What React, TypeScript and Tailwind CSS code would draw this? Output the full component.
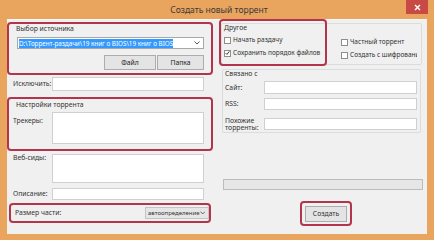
import React from 'react';

const font = { fontFamily: '"Noto Sans", "Open Sans", sans-serif' };

function Check({ checked, label }: { checked?: boolean; label: string }) {
  return (
    <div className="flex items-center h-[10px] gap-[2px] whitespace-nowrap text-[6.5px]">
      <span className="w-[7px] h-[7px] bg-white border border-[#8e8e8e] flex items-center justify-center shrink-0">
        {checked && (
          <svg width="6" height="6" viewBox="0 0 6 6">
            <path d="M0.8 3.2 L2.3 4.7 L5.2 1" stroke="#222" strokeWidth="1.1" fill="none" />
          </svg>
        )}
      </span>
      <span>{label}</span>
    </div>
  );
}

function Btn({ children, w }: { children: React.ReactNode; w: string }) {
  return (
    <div className={`${w} h-[15px] flex items-center justify-center bg-[#e4e4e4] border border-[#adadad] text-[#222]`}>
      {children}
    </div>
  );
}

export default function App() {
  return (
    <div className="w-[434px] h-[240px] bg-[#e9a45e] flex flex-col overflow-hidden text-[6.8px] leading-[10px] text-[#333]" style={font}>
      {/* Title bar */}
      <div className="relative h-[19px] flex items-center justify-center shrink-0">
        <span className="text-[8.5px] text-[#3a3a3a] ml-[4px]">Создать новый торрент</span>
        <div className="absolute right-[6px] top-0 w-[22px] h-[14px] bg-[#c84a44] flex items-center justify-center">
          <svg width="7" height="7" viewBox="0 0 7 7">
            <path d="M1 1 L6 6 M6 1 L1 6" stroke="#fff" strokeWidth="1.4" />
          </svg>
        </div>
      </div>

      {/* Content */}
      <div className="mx-[7px] h-[215px] bg-[#f0f0f0] flex shrink-0 border-t border-[#f7f7f7]">
        {/* Left column */}
        <div className="w-[206px] flex flex-col shrink-0">
          <div className="mt-[2px] h-[53px] border-2 border-[#b3354d] rounded-[4px] flex flex-col">
            <div className="h-[10px] pl-[7px]">Выбор источника</div>
            <div className="mt-[3px] ml-[8px] mr-[7px] h-[12px] bg-white border border-[#a8a8a8] flex items-center pl-[1px] pr-[3px]">
              <span className="bg-[#3399ff] text-white text-[6.3px] leading-[9px] whitespace-nowrap">D:\Торрент-раздачи\19 книг о BIOS\19 книг о BIOS</span>
              <svg className="ml-auto" width="6" height="4" viewBox="0 0 6 4"><path d="M0.5 0.5 L3 3 L5.5 0.5" stroke="#555" fill="none" /></svg>
            </div>
            <div className="mt-[6px] mr-[7px] flex justify-end gap-[1px]">
              <Btn w="w-[52px]">Файл</Btn>
              <Btn w="w-[47px]">Папка</Btn>
            </div>
          </div>

          <div className="mt-[2px] h-[14px] flex items-center">
            <span className="w-[45px] pl-[6px]">Исключить:</span>
            <div className="w-[152px] h-[14px] bg-white border border-[#d0d0d0]" />
          </div>

          <div className="mt-[6px] h-[54px] border-2 border-[#b3354d] rounded-[4px] flex flex-col">
            <div className="h-[10px] mt-[1px] pl-[7px]">Настройки торрента</div>
            <div className="mt-[2px] flex">
              <span className="w-[43px] pl-[4px] mt-[4px]">Трекеры:</span>
              <div className="w-[152px] h-[32px] bg-white border border-[#d0d0d0]" />
            </div>
          </div>

          <div className="mt-[3px] flex">
            <span className="w-[45px] pl-[6px] mt-[-1px]">Веб-сиды:</span>
            <div className="w-[152px] h-[29px] bg-white border border-[#d0d0d0]" />
          </div>

          <div className="mt-[5px] h-[12px] flex items-center">
            <span className="w-[45px] pl-[6px]">Описание:</span>
            <div className="w-[152px] h-[12px] bg-white border border-[#d0d0d0]" />
          </div>

          <div className="mt-[3px] mx-[2px] h-[20px] border-2 border-[#b3354d] rounded-[4px] flex items-center pl-[4px]">
            <span>Размер части:</span>
            <div className="ml-auto w-[64px] h-[12px] bg-[#e6e6e6] border border-[#c4c4c4] flex items-center pl-[2px] pr-[3px]">
              <span className="text-[6px]">автоопределение</span>
              <svg className="ml-auto" width="6" height="4" viewBox="0 0 6 4"><path d="M0.5 0.5 L3 3 L5.5 0.5" stroke="#555" fill="none" /></svg>
            </div>
          </div>
        </div>

        {/* Right column */}
        <div className="flex-1 flex flex-col">
          <div className="mt-[3px] ml-[8px] mr-[5px] h-[42px] border border-[#dcdcdc] rounded-[2px] flex">
            <div className="-ml-[3px] -mt-[5px] w-[108px] h-[47px] shrink-0 border-2 border-[#b3354d] rounded-[4px] flex flex-col pl-[3px]">
              <div className="h-[10px] mt-[2px]">Другое</div>
              <div className="mt-[2px]"><Check label="Начать раздачу" /></div>
              <div className="mt-[3px]"><Check checked label="Сохранить порядок файлов" /></div>
            </div>
            <div className="ml-[14px] w-[76px] flex flex-col overflow-hidden">
              <div className="mt-[13px]"><Check label="Частный торрент" /></div>
              <div className="mt-[3px]"><Check label="Создать с шифрованием" /></div>
            </div>
          </div>

          <div className="mt-[4px] ml-[9px] mr-[6px] h-[64px] border border-[#dcdcdc] rounded-[2px] flex flex-col pl-[2px]">
            <div className="h-[10px] -mt-[1px]">Связано с</div>
            <div className="mt-[2px] h-[13px] flex items-center">
              <span className="w-[39px]">Сайт:</span>
              <div className="w-[153px] h-[13px] bg-white border border-[#d0d0d0]" />
            </div>
            <div className="mt-[4px] h-[12px] flex items-center">
              <span className="w-[39px]">RSS:</span>
              <div className="w-[153px] h-[12px] bg-white border border-[#d0d0d0]" />
            </div>
            <div className="mt-[6px] h-[16px] flex items-center">
              <span className="w-[39px] leading-[7.5px]">Похожие<br />торренты:</span>
              <div className="w-[153px] h-[12px] bg-white border border-[#d0d0d0]" />
            </div>
          </div>

          <div className="mt-[46px] ml-[10px] mr-[4px] h-[11px] bg-[#e6e6e6] border border-[#bcbcbc]" />

          <div className="mt-[11px] ml-[87px] w-[52px] h-[25px] border-2 border-[#b3354d] rounded-[4px] flex items-center justify-center">
            <div className="w-[42px] h-[16px] flex items-center justify-center bg-[#e4e4e4] border border-[#adadad]">Создать</div>
          </div>
        </div>
      </div>
    </div>
  );
}
